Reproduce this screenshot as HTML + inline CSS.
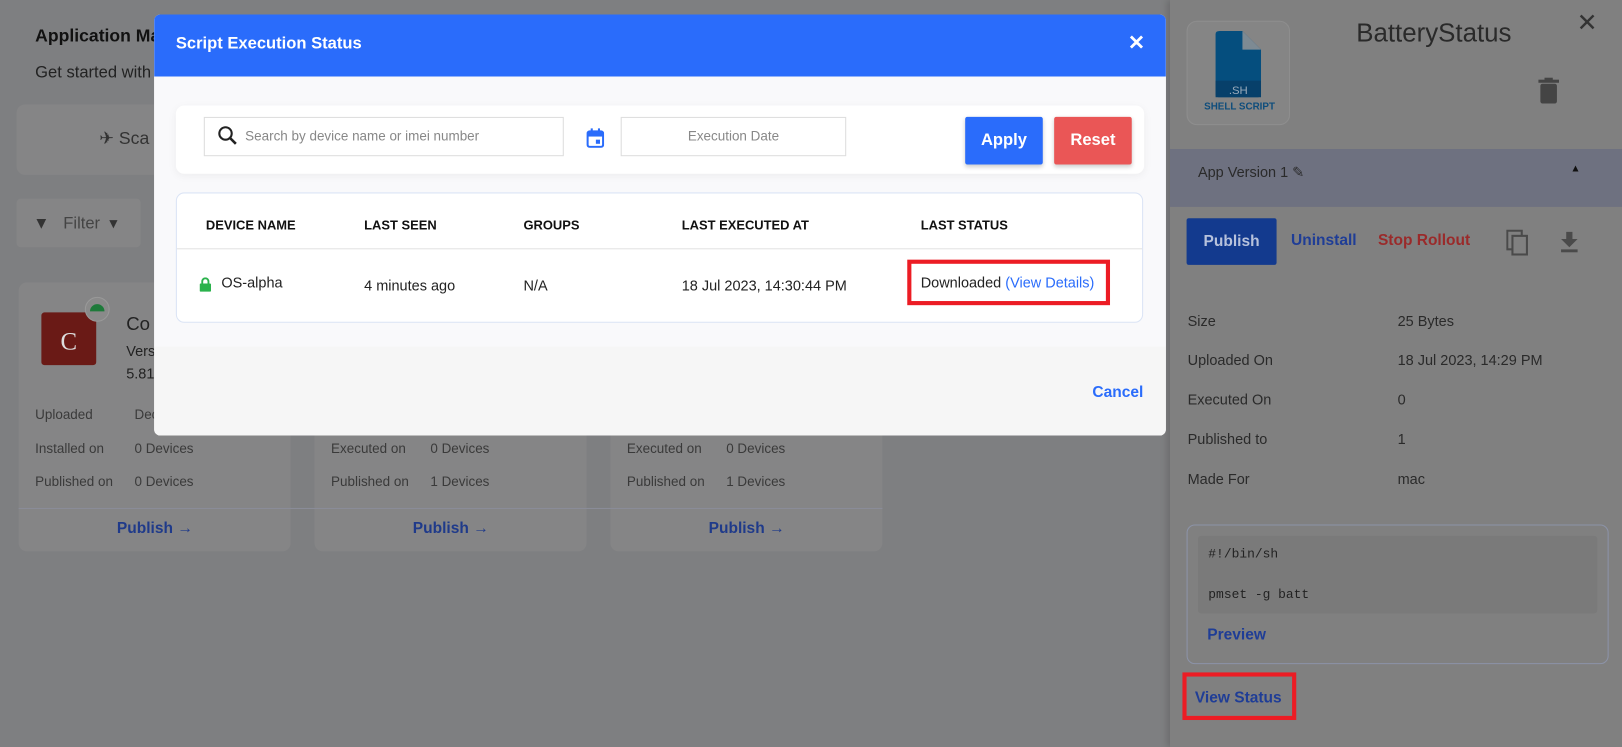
<!DOCTYPE html>
<html><head><style>
*{box-sizing:border-box;margin:0;padding:0}
html,body{width:1622px;height:747px;overflow:hidden;background:#7e7f81}
#w{position:absolute;left:0;top:0;width:1568px;height:722px;transform:scale(1.0345);transform-origin:0 0;font-family:"Liberation Sans",sans-serif;color:#222}
.a{position:absolute}
.card{background:#858586;border-radius:8px}
.g{color:#3a3a3a;font-size:13px}
.pub{color:#1f3a8a;font-weight:bold;font-size:15px}
</style></head><body><div id="w">
<div class="a" style="left:34px;top:25px;font-size:17px;font-weight:bold;color:#111">Application Ma</div>
<div class="a" style="left:34px;top:62px;font-size:16px;color:#222">Get started with</div>
<div class="a card" style="left:16px;top:101px;width:400px;height:68px"></div>
<div class="a" style="left:96px;top:124px;font-size:17px;color:#333">✈ Sca</div>
<div class="a card" style="left:16px;top:192px;width:120px;height:47px;border-radius:4px"></div>
<div class="a" style="left:32px;top:206px;font-size:16px;color:#333">▼ &nbsp; <span style="color:#444">Filter</span> &nbsp;▾</div>
<div class="a" style="left:1134px;top:68px;font-size:15px;color:#333">i</div>
<div class="a card" style="left:18px;top:273px;width:263px;height:260px"></div>
<div class="a card" style="left:304px;top:273px;width:263px;height:260px"></div>
<div class="a card" style="left:590px;top:273px;width:263px;height:260px"></div>
<div class="a" style="left:40px;top:302px;width:53px;height:51px;background:#6a1a16;border-radius:3px;color:#ddd;font-family:'Liberation Serif',serif;font-size:24px;text-align:center;line-height:58px">C</div>
<div class="a" style="left:82px;top:287px;width:24px;height:24px;border-radius:50%;background:#8a8a8a;border:1px solid #999"><div style="margin:6px 4px;width:14px;height:7px;background:#1e7a3a;border-radius:7px 7px 0 0"></div></div>
<div class="a" style="left:122px;top:303px;font-size:18px;color:#222">Co</div>
<div class="a" style="left:122px;top:331px;font-size:14px;color:#222">Vers</div>
<div class="a" style="left:122px;top:353px;font-size:14px;color:#222">5.81</div>
<div class="a g" style="left:34px;top:393px">Uploaded</div><div class="a g" style="left:130px;top:393px">Dec</div>
<div class="a g" style="left:34px;top:426px">Installed on</div><div class="a g" style="left:130px;top:426px">0 Devices</div>
<div class="a g" style="left:34px;top:458px">Published on</div><div class="a g" style="left:130px;top:458px">0 Devices</div>
<div class="a g" style="left:320px;top:426px">Executed on</div><div class="a g" style="left:416px;top:426px">0 Devices</div>
<div class="a g" style="left:320px;top:458px">Published on</div><div class="a g" style="left:416px;top:458px">1 Devices</div>
<div class="a g" style="left:606px;top:426px">Executed on</div><div class="a g" style="left:702px;top:426px">0 Devices</div>
<div class="a g" style="left:606px;top:458px">Published on</div><div class="a g" style="left:702px;top:458px">1 Devices</div>
<div class="a" style="left:18px;top:491px;width:835px;height:1px;background:#8a8d99"></div>
<div class="a pub" style="left:113px;top:502px">Publish →</div>
<div class="a pub" style="left:399px;top:502px">Publish →</div>
<div class="a pub" style="left:685px;top:502px">Publish →</div>

<div class="a" style="left:1131px;top:0;width:437px;height:722px;background:#808080;box-shadow:-3px 0 6px rgba(0,0,0,.15)"></div>
<div class="a" style="left:1147px;top:20px;width:100px;height:101px;background:#858585;border:1px solid #8e8e8e;border-radius:10px"></div>
<svg class="a" style="left:1175px;top:30px" width="44" height="65" viewBox="0 0 44 65"><path d="M4 0H26L44 18V61Q44 64 41 64H3Q0 64 0 61V3Q0 0 4 0Z" fill="#054e7e"/><path d="M26 0V18H44Z" fill="#7d8a93"/><rect y="48" width="44" height="16" fill="#07406a"/><text x="22" y="61" fill="#9ab" font-size="11" text-anchor="middle" font-family="Liberation Sans">.SH</text></svg>
<div class="a" style="left:1164px;top:98px;font-size:9.5px;font-weight:bold;color:#0e4d7c">SHELL SCRIPT</div>
<div class="a" style="left:1311px;top:18px;font-size:25px;color:#2a2a2a">BatteryStatus</div>
<div class="a" style="left:1524px;top:8px;font-size:24px;color:#333">✕</div>
<svg class="a" style="left:1487px;top:75px" width="20" height="25" viewBox="0 0 20 25"><rect x="2" y="6" width="16" height="19" rx="2" fill="#444"/><rect x="0" y="2" width="20" height="3" fill="#444"/><rect x="6" y="0" width="8" height="3" fill="#444"/></svg>
<div class="a" style="left:1131px;top:144px;width:437px;height:56px;background:#6e7180"></div>
<div class="a" style="left:1158px;top:158px;font-size:14px;color:#2a2a2a">App Version 1 ✎</div>
<div class="a" style="left:1518px;top:158px;font-size:10px;color:#111">▲</div>
<div class="a" style="left:1147px;top:211px;width:87px;height:45px;background:#133a8e;border-radius:2px;color:#b7c2dc;font-weight:bold;font-size:15px;text-align:center;line-height:45px">Publish</div>
<div class="a" style="left:1248px;top:224px;font-size:15px;font-weight:bold;color:#1f3d96">Uninstall</div>
<div class="a" style="left:1332px;top:224px;font-size:15px;font-weight:bold;color:#9a2a2a">Stop Rollout</div>
<svg class="a" style="left:1456px;top:222px" width="22" height="26" viewBox="0 0 22 26"><rect x="1" y="1" width="14" height="18" fill="none" stroke="#4a4a4a" stroke-width="2"/><rect x="6" y="6" width="14" height="18" fill="#808080" stroke="#4a4a4a" stroke-width="2"/></svg>
<svg class="a" style="left:1508px;top:224px" width="18" height="20" viewBox="0 0 18 20"><path d="M6 0H12V7H17L9 15L1 7H6Z M1 17H17V20H1Z" fill="#4a4a4a"/></svg>
<div class="a" style="left:1148px;top:302px;font-size:14px;color:#2a2a2a">Size</div><div class="a" style="left:1351px;top:302px;font-size:14px;color:#2a2a2a">25 Bytes</div>
<div class="a" style="left:1148px;top:340px;font-size:14px;color:#2a2a2a">Uploaded On</div><div class="a" style="left:1351px;top:340px;font-size:14px;color:#2a2a2a">18 Jul 2023, 14:29 PM</div>
<div class="a" style="left:1148px;top:378px;font-size:14px;color:#2a2a2a">Executed On</div><div class="a" style="left:1351px;top:378px;font-size:14px;color:#2a2a2a">0</div>
<div class="a" style="left:1148px;top:416px;font-size:14px;color:#2a2a2a">Published to</div><div class="a" style="left:1351px;top:416px;font-size:14px;color:#2a2a2a">1</div>
<div class="a" style="left:1148px;top:455px;font-size:14px;color:#2a2a2a">Made For</div><div class="a" style="left:1351px;top:455px;font-size:14px;color:#2a2a2a">mac</div>
<div class="a" style="left:1147px;top:507px;width:408px;height:135px;border:1px solid #8c93a8;border-radius:8px"></div>
<div class="a" style="left:1158px;top:518px;width:386px;height:75px;background:#7a7a7a;border-radius:3px"></div>
<div class="a" style="left:1168px;top:529px;font-family:'Liberation Mono',monospace;font-size:12.5px;color:#222">#!/bin/sh</div>
<div class="a" style="left:1168px;top:568px;font-family:'Liberation Mono',monospace;font-size:12.5px;color:#222">pmset -g batt</div>
<div class="a" style="left:1167px;top:605px;font-size:15px;font-weight:bold;color:#1f3d96">Preview</div>
<div class="a" style="left:1143px;top:650px;width:110px;height:46px;border:4px solid #ec1c24"></div>
<div class="a" style="left:1155px;top:666px;font-size:15px;font-weight:bold;color:#1f3d96">View Status</div>

<div class="a" style="left:149px;top:14px;width:978px;height:407px;background:#fff;border-radius:6px;overflow:hidden">
 <div style="height:60px;background:#2a6cfb;color:#fff;font-weight:bold;font-size:16px;padding:20px 0 0 21px">Script Execution Status<span style="position:absolute;right:20px;top:15px;font-size:20px">✕</span></div>
 <div style="height:261px;background:#f9f9fb"></div>
 <div style="height:86px;background:#f6f6f6"></div>
 <div class="a" style="left:21px;top:88px;width:936px;height:66px;background:#fff;border-radius:8px;box-shadow:0 2px 8px rgba(0,0,0,.05)"></div>
 <div class="a" style="left:48px;top:99px;width:348px;height:38px;border:1px solid #ddd"></div>
 <svg class="a" style="left:61px;top:107px" width="20" height="20" viewBox="0 0 20 20"><circle cx="8" cy="8" r="6" fill="none" stroke="#222" stroke-width="2"/><path d="M12.5 12.5L18 18" stroke="#222" stroke-width="2.5"/></svg>
 <div class="a" style="left:88px;top:110px;font-size:13px;color:#888">Search by device name or imei number</div>
 <svg class="a" style="left:418px;top:110px" width="17" height="19" viewBox="0 0 17 19"><rect x="1" y="3" width="15" height="15" rx="2" fill="none" stroke="#2a6cfb" stroke-width="2"/><rect x="1" y="3" width="15" height="5" fill="#2a6cfb"/><rect x="4" y="0" width="2" height="4" fill="#2a6cfb"/><rect x="11" y="0" width="2" height="4" fill="#2a6cfb"/><rect x="9" y="11" width="4" height="4" fill="#2a6cfb"/></svg>
 <div class="a" style="left:451px;top:99px;width:218px;height:38px;border:1px solid #ddd;text-align:center;line-height:36px;font-size:13px;color:#888">Execution Date</div>
 <div class="a" style="left:784px;top:99px;width:75px;height:46px;background:#2a6cfb;border-radius:2px;color:#fff;font-weight:bold;font-size:16px;text-align:center;line-height:46px;box-shadow:0 2px 4px rgba(0,0,0,.2)">Apply</div>
 <div class="a" style="left:870px;top:99px;width:75px;height:46px;background:#ea5656;border-radius:2px;color:#fff;font-weight:bold;font-size:16px;text-align:center;line-height:46px;box-shadow:0 2px 4px rgba(0,0,0,.2)">Reset</div>
 <div class="a" style="left:21px;top:172px;width:935px;height:126px;background:#fff;border:1px solid #dbe4f5;border-radius:8px"></div>
 <div class="a" style="left:22px;top:226px;width:933px;height:1px;background:#e2e2e2"></div>
 <div class="a" style="left:50px;top:197px;font-size:12.5px;font-weight:bold;color:#111">DEVICE NAME</div>
 <div class="a" style="left:203px;top:197px;font-size:12.5px;font-weight:bold;color:#111">LAST SEEN</div>
 <div class="a" style="left:357px;top:197px;font-size:12.5px;font-weight:bold;color:#111">GROUPS</div>
 <div class="a" style="left:510px;top:197px;font-size:12.5px;font-weight:bold;color:#111">LAST EXECUTED AT</div>
 <div class="a" style="left:741px;top:197px;font-size:12.5px;font-weight:bold;color:#111">LAST STATUS</div>
 <svg class="a" style="left:44px;top:254px" width="11" height="14" viewBox="0 0 11 14"><path d="M2.5 6V4a3 3 0 0 1 6 0v2" fill="none" stroke="#2bb24c" stroke-width="1.8"/><rect y="6" width="11" height="8" rx="1" fill="#2bb24c"/></svg>
 <div class="a" style="left:65px;top:251px;font-size:14px;color:#222">OS-alpha</div>
 <div class="a" style="left:203px;top:254px;font-size:14px;color:#222">4 minutes ago</div>
 <div class="a" style="left:357px;top:254px;font-size:14px;color:#222">N/A</div>
 <div class="a" style="left:510px;top:254px;font-size:14px;color:#222">18 Jul 2023, 14:30:44 PM</div>
 <div class="a" style="left:728px;top:237px;width:196px;height:44px;border:4px solid #ec1c24"></div>
 <div class="a" style="left:741px;top:251px;font-size:14px;color:#222">Downloaded <span style="color:#2a6cfb">(View Details)</span></div>
 <div class="a" style="left:907px;top:357px;font-size:15px;font-weight:bold;color:#2a6cfb">Cancel</div>
</div>
</div></body></html>
